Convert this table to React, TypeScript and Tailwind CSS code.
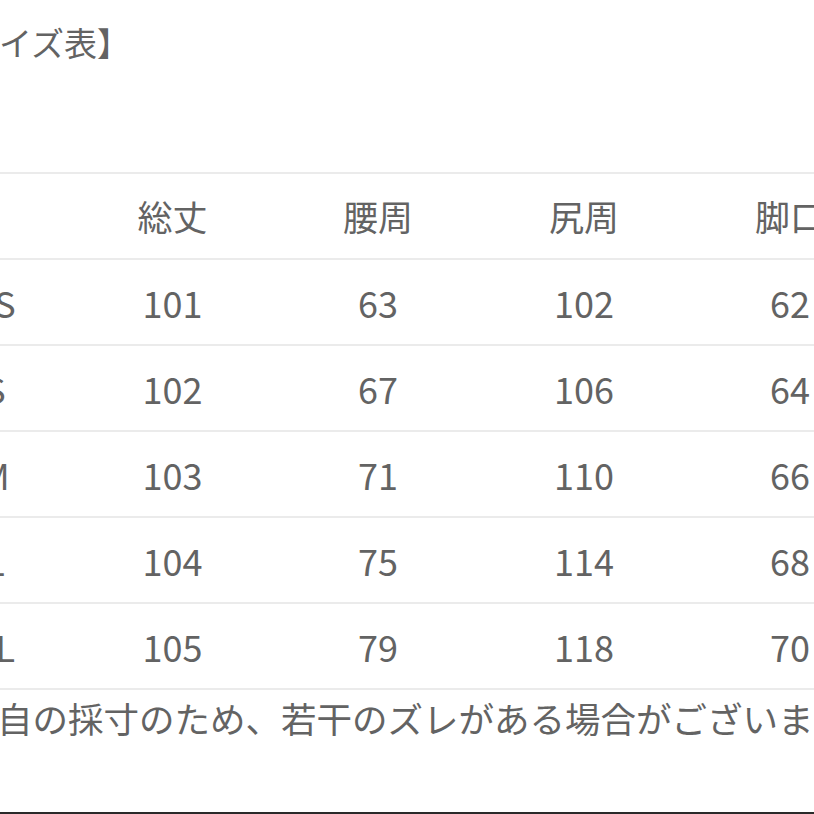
import React from 'react';

const columns = ['', '総丈', '腰周', '尻周', '脚口'];

const rows = [
  ['XS', '101', '63', '102', '62'],
  ['S', '102', '67', '106', '64'],
  ['M', '103', '71', '110', '66'],
  ['L', '104', '75', '114', '68'],
  ['XL', '105', '79', '118', '70'],
];

const gridCols = 'grid grid-cols-[150px_205px_206px_206px_206px]';

export default function App() {
  return (
    <div
      className="w-[814px] h-[814px] overflow-hidden bg-white text-[#636363] border-b-2 border-[#2a2a2a]"
      style={{ fontFamily: '"Noto Sans CJK JP", "Noto Sans", sans-serif' }}
    >
      {/* title, cut off on the left like the source crop */}
      <div className="h-[172px] pt-[19px]">
        <p className="ml-[-67px] whitespace-nowrap text-[33px] leading-[46px]">【サイズ表】</p>
      </div>

      <div className="ml-[-80px] w-[973px]">
        <div className={`${gridCols} h-[86px] items-center border-t-2 border-[#ebebeb] text-[35px]`}>
          {columns.map((c, i) => (
            <div key={i} className="text-center whitespace-nowrap">
              {c}
            </div>
          ))}
        </div>
        {rows.map((r) => (
          <div
            key={r[0]}
            className={`${gridCols} h-[86px] items-center border-t-2 border-[#ebebeb] text-[36px]`}
          >
            {r.map((v, i) => (
              <div key={i} className="text-center whitespace-nowrap">
                {v}
              </div>
            ))}
          </div>
        ))}
        <div className="border-t-2 border-[#ebebeb]" />
      </div>

      <p className="ml-[-74px] mt-[8px] whitespace-nowrap text-[35.5px] leading-[40px]">
        ※独自の採寸のため、若干のズレがある場合がございます。
      </p>
    </div>
  );
}
